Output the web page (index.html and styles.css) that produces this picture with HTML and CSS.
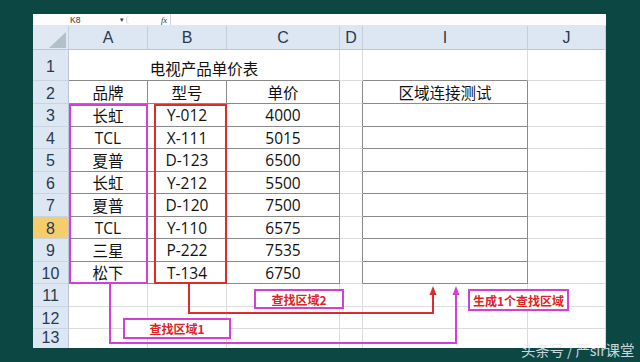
FILE: index.html
```html
<!DOCTYPE html>
<html lang="zh">
<head>
<meta charset="utf-8">
<link rel="stylesheet" href="styles.css">
</head>
<body>
<div class="panel">
  <div class="fbar">
    <span class="namebox">K8</span>
    <span class="drop">▾</span>
    <span class="knob"></span>
    <span class="fx">fx</span>
    <span class="fsep"></span>
  </div>
  <div class="sheet">
    <div class="corner"><svg width="36" height="24" viewBox="0 0 36 24"><polygon points="16,22 33,6 33,22" fill="#b4bfcc"/></svg></div>
    <div class="ch">A</div><div class="ch">B</div><div class="ch">C</div><div class="ch">D</div><div class="ch">I</div><div class="ch">J</div>

    <div class="rh">1</div>
    <div class="c title span3">电视产品单价表</div><div class="c"></div><div class="c tb"></div><div class="c"></div>

    <div class="rh">2</div>
    <div class="c t">品牌</div><div class="c t">型号</div><div class="c t">单价</div><div class="c dv"></div><div class="c t">区域连接测试</div><div class="c"></div>

    <div class="rh">3</div>
    <div class="c t">长虹</div><div class="c t">Y-012</div><div class="c t">4000</div><div class="c dv"></div><div class="c t"></div><div class="c"></div>

    <div class="rh">4</div>
    <div class="c t">TCL</div><div class="c t">X-111</div><div class="c t">5015</div><div class="c dv"></div><div class="c t"></div><div class="c"></div>

    <div class="rh">5</div>
    <div class="c t">夏普</div><div class="c t">D-123</div><div class="c t">6500</div><div class="c dv"></div><div class="c t"></div><div class="c"></div>

    <div class="rh">6</div>
    <div class="c t">长虹</div><div class="c t">Y-212</div><div class="c t">5500</div><div class="c dv"></div><div class="c t"></div><div class="c"></div>

    <div class="rh">7</div>
    <div class="c t">夏普</div><div class="c t">D-120</div><div class="c t">7500</div><div class="c dv"></div><div class="c t"></div><div class="c"></div>

    <div class="rh sel">8</div>
    <div class="c t">TCL</div><div class="c t">Y-110</div><div class="c t">6575</div><div class="c dv"></div><div class="c t"></div><div class="c"></div>

    <div class="rh">9</div>
    <div class="c t">三星</div><div class="c t">P-222</div><div class="c t">7535</div><div class="c dv"></div><div class="c t"></div><div class="c"></div>

    <div class="rh">10</div>
    <div class="c t">松下</div><div class="c t">T-134</div><div class="c t">6750</div><div class="c dv"></div><div class="c t"></div><div class="c"></div>

    <div class="rh">11</div>
    <div class="c"></div><div class="c"></div><div class="c"></div><div class="c"></div><div class="c"></div><div class="c"></div>

    <div class="rh">12</div>
    <div class="c"></div><div class="c"></div><div class="c"></div><div class="c"></div><div class="c"></div><div class="c"></div>

    <div class="rh last">13</div>
    <div class="c"></div><div class="c"></div><div class="c"></div><div class="c"></div><div class="c"></div><div class="c"></div>
  </div>

  <div class="box box-a"></div>
  <div class="box box-b"></div>

  <svg class="links" width="573" height="334" viewBox="0 0 573 334">
    <polyline points="77,270 77,329 423,329 423,279" fill="none" stroke="#d63fd6" stroke-width="2"/>
    <polygon points="419.5,281 423,272 426.5,281" fill="#d63fd6"/>
    <polyline points="156,270 156,299 400,299 400,279" fill="none" stroke="#de2b2b" stroke-width="2"/>
    <polygon points="396.5,281 400,272 403.5,281" fill="#de2b2b"/>
  </svg>

  <div class="tag tag-1">查找区域1</div>
  <div class="tag tag-2">查找区域2</div>
  <div class="tag tag-3">生成1个查找区域</div>
</div>
<div class="mark">头条号 / 严sir课堂</div>
</body>
</html>
```
FILE: styles.css
```css
html, body {
  margin: 0;
  padding: 0;
}
body {
  width: 640px;
  height: 362px;
  overflow: hidden;
  background: #0c4744;
  position: relative;
  font-family: "Open Sans", "Noto Sans CJK SC", sans-serif;
}
.panel {
  position: relative;
  margin: 14px 0 0 33px;
  width: 573px;
  height: 334px;
  background: #ffffff;
  overflow: hidden;
}
.fbar {
  height: 12px;
  display: flex;
  align-items: center;
  font-size: 8.5px;
  color: #333;
  background: #fdfdfd;
  box-sizing: border-box;
  border-bottom: 1px solid #e2e6ea;
}
.namebox {
  margin-left: 37px;
  width: 50px;
  font-family: "Liberation Sans", sans-serif;
}
.drop {
  font-size: 7px;
  color: #333;
}
.knob {
  width: 6px;
  height: 8px;
  margin-left: 2px;
  border-radius: 50%;
  border-left: 1px solid #c8ccd0;
}
.fx {
  margin-left: 28px;
  font-style: italic;
  font-family: "Liberation Serif", serif;
  font-size: 8.5px;
}
.fsep {
  margin-left: 3px;
  width: 1px;
  height: 11px;
  background: #d0d4d8;
}
.sheet {
  display: grid;
  grid-template-columns: 36px 79px 79px 113px 23px 165px 78px;
  grid-template-rows: 24px 31px 23px repeat(11, 22.5px);
}
.corner {
  background: #dfe8f3;
  border-right: 1px solid #c3cfdd;
  border-bottom: 1px solid #b9c7d8;
  box-sizing: border-box;
}
.corner svg {
  display: block;
}
.ch {
  background: #dde7f3;
  border-right: 1px solid #c3cfdd;
  border-bottom: 1px solid #b9c7d8;
  box-sizing: border-box;
  display: flex;
  align-items: center;
  justify-content: center;
  font-family: "Liberation Sans", sans-serif;
  font-size: 16px;
  color: #283a4e;
}
.rh {
  background: #dde7f3;
  border-right: 1px solid #b9c7d8;
  border-bottom: 1px solid #c9d4e1;
  box-sizing: border-box;
  display: flex;
  align-items: center;
  justify-content: center;
  font-family: "Liberation Sans", sans-serif;
  font-size: 16px;
  line-height: 17px;
  color: #283a4e;
  padding-top: 2px;
}
.rh.last {
  align-items: flex-start;
  padding-top: 1px;
  line-height: 16px;
}
.rh.sel {
  background: #f6cd6b;
}
.c {
  border-right: 1px solid #dcdcdc;
  border-bottom: 1px solid #dcdcdc;
  box-sizing: border-box;
  display: flex;
  align-items: center;
  justify-content: center;
  font-size: 15.5px;
  color: #111;
  white-space: nowrap;
  padding-top: 1px;
}
.c.title {
  grid-column: span 3;
  border-bottom: 1px solid #8a8a8a;
  padding-top: 6px;
}
.c.tb {
  border-bottom: 1px solid #8a8a8a;
}
.c.t {
  border-right: 1px solid #8a8a8a;
  border-bottom: 1px solid #8a8a8a;
}
.c.dv {
  border-right: 1px solid #8a8a8a;
}
.box {
  position: absolute;
  box-sizing: border-box;
  border: 2px solid #d63fd6;
}
.box-a {
  left: 36px;
  top: 90px;
  width: 79px;
  height: 180px;
}
.box-b {
  left: 121px;
  top: 90px;
  width: 73px;
  height: 180px;
  border-color: #de2b2b;
}
.links {
  position: absolute;
  left: 0;
  top: 0;
}
.tag {
  position: absolute;
  box-sizing: border-box;
  border: 2px solid #d63fd6;
  background: #ffffff;
  display: flex;
  align-items: center;
  justify-content: center;
  font-family: "Noto Sans CJK SC", sans-serif;
  font-weight: 700;
  font-size: 12px;
  color: #e02424;
  white-space: nowrap;
}
.tag-1 {
  left: 90px;
  top: 304px;
  width: 108px;
  height: 21px;
}
.tag-2 {
  left: 221px;
  top: 275px;
  width: 90px;
  height: 20px;
}
.tag-3 {
  left: 435px;
  top: 275px;
  width: 101px;
  height: 22px;
}
.mark {
  position: absolute;
  left: 521px;
  top: 339px;
  font-family: "Noto Sans CJK SC", sans-serif;
  font-size: 14.5px;
  color: rgba(232, 236, 236, 0.88);
  white-space: nowrap;
  letter-spacing: -0.2px;
}
```
